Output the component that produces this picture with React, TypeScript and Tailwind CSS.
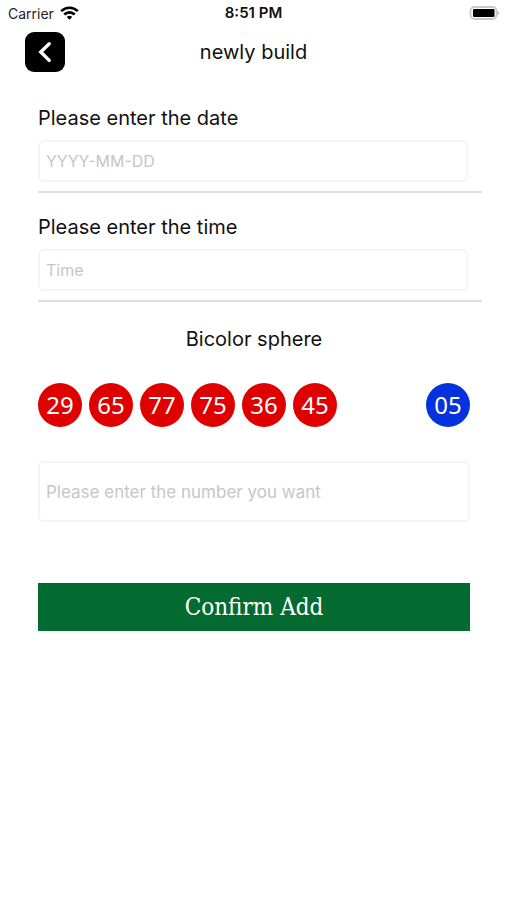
import { useState } from 'react';

const redBalls = ['29', '65', '77', '75', '36', '45'];
const blueBalls = ['05'];

function StatusBar() {
  return (
    <div className="grid h-[26px] grid-cols-3 items-center px-2">
      <div className="flex items-center gap-1.5 text-[14px] text-[#222]">
        <span>Carrier</span>
        <svg width="19" height="14" viewBox="0 0 19 14" fill="none" stroke="#000" strokeWidth="2.6" aria-hidden="true">
          <path d="M1.2 5.1a11.8 11.8 0 0 1 16.6 0" />
          <path d="M4.3 8.5a7.4 7.4 0 0 1 10.4 0" />
          <path d="M9.5 13.8 6.8 11a3.9 3.9 0 0 1 5.4 0z" fill="#000" stroke="none" />
        </svg>
      </div>
      <span className="text-center text-[15px] font-semibold text-[#111]">8:51 PM</span>
      <svg className="justify-self-end" width="30" height="14" viewBox="0 0 30 14" aria-hidden="true">
        <rect x="1.5" y="1" width="26" height="12" rx="4" fill="#fff" stroke="#c9c9c9" strokeWidth="1.8" />
        <rect x="4" y="3" width="21.5" height="8" rx="1" fill="#000" />
        <path d="M28.4 4.8c1 .4 1.5 1.2 1.5 2.2s-.5 1.8-1.5 2.2z" fill="#b5b5b5" />
      </svg>
    </div>
  );
}

interface FieldProps {
  id: string;
  label: string;
  placeholder: string;
  value: string;
  onChange: (value: string) => void;
}

function Field({ id, label, placeholder, value, onChange }: FieldProps) {
  return (
    <div className="ml-[38px] mr-[25px] border-b-2 border-[#dedede] pb-[9px]">
      <label htmlFor={id} className="block text-[20px] leading-6 text-[#111]">
        {label}
      </label>
      <div className="mt-2.5 pr-3.5">
        <input
          id={id}
          type="text"
          placeholder={placeholder}
          value={value}
          onChange={(e) => onChange(e.target.value)}
          className="block h-[42px] w-full rounded-md border-2 border-[#f4f4f4] px-1.5 text-[16px] placeholder:text-[#c6c6c8]"
        />
      </div>
    </div>
  );
}

function Ball({ value, color }: { value: string; color: string }) {
  return (
    <span
      className={`flex size-11 items-center justify-center rounded-full font-['Noto_Sans',sans-serif] text-[24px] text-white ${color}`}
    >
      {value}
    </span>
  );
}

export default function App() {
  const [date, setDate] = useState('');
  const [time, setTime] = useState('');
  const [numbers, setNumbers] = useState('');

  return (
    <div className="min-h-screen bg-white font-['Inter',sans-serif]">
      <StatusBar />

      {/* Header */}
      <header className="grid grid-cols-[40px_1fr_40px] items-center px-[25px] pt-1.5">
        <button
          type="button"
          aria-label="Back"
          className="flex size-10 items-center justify-center rounded-[9px] bg-black"
        >
          <svg width="40" height="40" viewBox="0 0 40 40" fill="none" stroke="#fff" strokeWidth="3.4" strokeLinecap="round" aria-hidden="true">
            <path d="M24.2 11.8 15.8 20l8.4 8.4" />
          </svg>
        </button>
        <h1 className="text-center text-[20px] leading-6 text-[#111]">newly build</h1>
      </header>

      <form onSubmit={(e) => e.preventDefault()}>
        <div className="flex flex-col gap-[22px] pt-[34px]">
          <Field id="date" label="Please enter the date" placeholder="YYYY-MM-DD" value={date} onChange={setDate} />
          <Field id="time" label="Please enter the time" placeholder="Time" value={time} onChange={setTime} />
        </div>

        <div className="pl-[38px] pr-[37px] pt-[25px]">
          <h2 className="text-center text-[20px] leading-6 text-[#111]">Bicolor sphere</h2>

          <div className="mt-8 flex items-center justify-between">
            <div className="flex gap-[7px]">
              {redBalls.map((n) => (
                <Ball key={n} value={n} color="bg-[#df0000]" />
              ))}
            </div>
            {blueBalls.map((n) => (
              <Ball key={n} value={n} color="bg-[#0433dd]" />
            ))}
          </div>

          <input
            type="text"
            aria-label="Number"
            placeholder="Please enter the number you want"
            value={numbers}
            onChange={(e) => setNumbers(e.target.value)}
            className="mt-[34px] block h-[61px] w-full rounded-[5px] border-2 border-[#f4f4f4] px-1.5 text-[17px] placeholder:text-[#c6c6c8]"
          />

          <button
            type="submit"
            className="mt-[61px] h-12 w-full bg-[#036b30] font-['DejaVu_Serif_Condensed','DejaVu_Serif',serif] text-[24px] text-white"
          >
            Confirm Add
          </button>
        </div>
      </form>
    </div>
  );
}
